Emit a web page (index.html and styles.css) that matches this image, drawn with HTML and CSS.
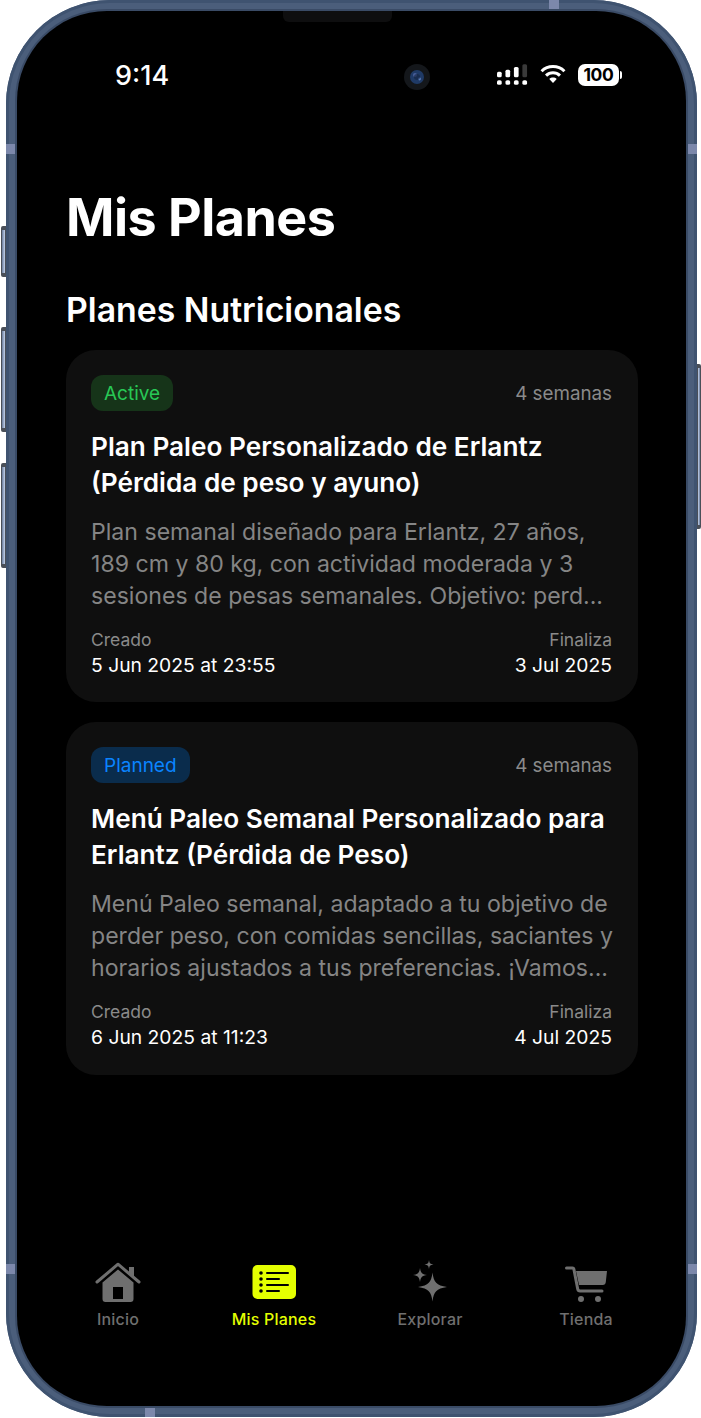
FILE: index.html
```html
<!DOCTYPE html>
<html lang="es">
<head>
<meta charset="utf-8">
<title>Mis Planes</title>
<link rel="stylesheet" href="styles.css">
</head>
<body>
<div class="phone">
  <span class="btn btn-a"></span>
  <span class="btn btn-b"></span>
  <span class="btn btn-c"></span>
  <span class="btn btn-d"></span>
  <span class="band band-l1"></span>
  <span class="band band-l2"></span>
  <span class="band band-r1"></span>
  <span class="band band-r2"></span>
  <span class="band band-t"></span>
  <span class="band band-b"></span>
  <div class="screen">
    <span class="speaker"></span>
    <div class="status">
      <span class="time">9:14</span>
      <svg class="camera" width="28" height="28" viewBox="0 0 28 28"><circle cx="14" cy="14" r="13" fill="#14171b"/><circle cx="14" cy="14" r="7" fill="#1f3a66"/><circle cx="12" cy="12" r="2" fill="#4a5f9a"/><circle cx="16.5" cy="16" r="1.4" fill="#5c7fc0"/><circle cx="14" cy="14" r="3" fill="#14233f" opacity=".6"/></svg>
      <div class="indicators">
        <svg width="31" height="22" viewBox="0 0 33 23"><g fill="#fff"><rect x="0" y="8" width="5" height="6" rx="1.6"/><rect x="9" y="6" width="5" height="8" rx="1.6"/><rect x="18" y="3" width="5" height="11" rx="1.6"/><rect x="27" y="0" width="5" height="14" rx="1.6" fill="#3a3a3a"/><rect x="0" y="17" width="5" height="5" rx="1.8"/><rect x="9" y="17" width="5" height="5" rx="1.8"/><rect x="18" y="17" width="5" height="5" rx="1.8"/><rect x="27" y="17" width="5" height="5" rx="1.8"/></g></svg>
        <svg class="wifi" width="26" height="20" viewBox="0 0 27 21"><g fill="none" stroke="#fff" stroke-width="3.2"><path d="M1.5 7.6C8.2 1.1 18.8 1.1 25.5 7.6"/><path d="M6.2 12.2C10.4 8.2 16.6 8.2 20.8 12.2"/></g><path d="M9.6 15.8C11.8 13.8 15.2 13.8 17.4 15.8L13.5 20Z" fill="#fff"/></svg>
        <div class="battery"><span class="batt-body">100</span><span class="batt-tip"></span></div>
      </div>
    </div>
    <main class="content">
      <h1 class="page-title">Mis Planes</h1>
      <h2 class="section-title">Planes Nutricionales</h2>
      <article class="card">
        <div class="card-top">
          <span class="badge badge-active">Active</span>
          <span class="duration">4 semanas</span>
        </div>
        <h3 class="plan-title">Plan Paleo Personalizado de Erlantz (Pérdida de peso y ayuno)</h3>
        <p class="plan-desc">Plan semanal diseñado para Erlantz, 27 años, 189 cm y 80 kg, con actividad moderada y 3 sesiones de pesas semanales. Objetivo: perd...</p>
        <div class="dates">
          <div><div class="date-label">Creado</div><div class="date-value">5 Jun 2025 at 23:55</div></div>
          <div class="date-end"><div class="date-label">Finaliza</div><div class="date-value">3 Jul 2025</div></div>
        </div>
      </article>
      <article class="card">
        <div class="card-top">
          <span class="badge badge-planned">Planned</span>
          <span class="duration">4 semanas</span>
        </div>
        <h3 class="plan-title">Menú Paleo Semanal Personalizado para Erlantz (Pérdida de Peso)</h3>
        <p class="plan-desc">Menú Paleo semanal, adaptado a tu objetivo de perder peso, con comidas sencillas, saciantes y horarios ajustados a tus preferencias. ¡Vamos...</p>
        <div class="dates">
          <div><div class="date-label">Creado</div><div class="date-value">6 Jun 2025 at 11:23</div></div>
          <div class="date-end"><div class="date-label">Finaliza</div><div class="date-value">4 Jul 2025</div></div>
        </div>
      </article>
    </main>
    <nav class="tabbar">
      <div class="tab">
        <svg class="tab-icon" width="46" height="40" viewBox="0 0 46 40"><path d="M2 20 23 2.200l21 17.800" fill="none" stroke="#6f6f6f" stroke-width="3" stroke-linecap="round" stroke-linejoin="round"/><path d="M34 5h5v10.500l-5-4.200Z" fill="#6f6f6f"/><path fill-rule="evenodd" d="M23 7.500 38.500 20.500V37a3 3 0 0 1-3 3H10.500a3 3 0 0 1-3-3V20.500ZM18 25V37H28V25Z" fill="#6f6f6f"/></svg>
        <span class="tab-label">Inicio</span>
      </div>
      <div class="tab tab-on">
        <svg class="tab-icon" width="46" height="40" viewBox="0 0 46 40"><rect x="1.500" y="3" width="43.500" height="34" rx="5" fill="#e4ff00"/><g fill="#000"><circle cx="10" cy="11" r="1.800"/><circle cx="10" cy="17" r="1.800"/><circle cx="10" cy="23" r="1.800"/><circle cx="10" cy="29" r="1.800"/><rect x="15" y="10" width="23" height="2" rx="1"/><rect x="15" y="16" width="14" height="2" rx="1"/><rect x="15" y="22" width="23" height="2" rx="1"/><rect x="15" y="28" width="14" height="2" rx="1"/></g></svg>
        <span class="tab-label">Mis Planes</span>
      </div>
      <div class="tab">
        <svg class="tab-icon" width="46" height="40" viewBox="0 0 46 40"><g fill="#6f6f6f"><path d="M25.500 10.500c1.300 10 3.800 12.800 14.500 14.500-10.700 1.700-13.200 4.500-14.500 14.500C24.200 29.500 21.700 26.700 11 25c10.700-1.700 13.200-4.500 14.500-14.500Z"/><path d="M13 6c.6 4.600 1.900 6.400 7 7-5.100.6-6.400 2.400-7 7-.6-4.600-1.900-6.400-7-7 5.100-.6 6.400-2.400 7-7Z"/><path d="M22 -2c.4 3 1.200 4.100 4.500 4.500C23.200 2.900 22.400 4 22 7c-.4-3-1.200-4.100-4.500-4.500C20.800 2.100 21.600 1 22 -2Z"/></g></svg>
        <span class="tab-label">Explorar</span>
      </div>
      <div class="tab">
        <svg class="tab-icon" width="46" height="40" viewBox="0 0 46 40"><path d="M3.500 6H9.500c.8 0 1.200.4 1.400 1.200L14.700 27c.3 1.400 1 2 2.400 2H39" fill="none" stroke="#6f6f6f" stroke-width="3" stroke-linecap="round"/><path d="M13 9H44l-1.200 11c-.2 2-1.200 3-3 3H16Z" fill="#6f6f6f"/><circle cx="18" cy="37" r="3" fill="#6f6f6f"/><circle cx="35" cy="37" r="3" fill="#6f6f6f"/></svg>
        <span class="tab-label">Tienda</span>
      </div>
    </nav>
  </div>
</div>
</body>
</html>
```
FILE: styles.css
```css
* { box-sizing: border-box; }
html, body { margin: 0; padding: 0; background: #fff; }
body { font-family: Inter, "Liberation Sans", sans-serif; width: 701px; height: 1418px; overflow: hidden; }

.phone {
  position: relative;
  margin-left: 6px;
  width: 691px;
  height: 1417px;
  padding: 11px;
  border-radius: 104px;
  background: #4b5e7b;
  box-shadow: inset 0 0 0 3px #3f5370;
}
.screen {
  position: relative;
  height: 100%;
  background: #000;
  border-radius: 90px;
  box-shadow: 0 0 0 2px #3a4b66;
  display: flex;
  flex-direction: column;
  overflow: hidden;
}
.btn {
  position: absolute;
  width: 5px;
  background: linear-gradient(90deg, #6b7d9c, #c4d3ec);
  border: 1px solid #4a4f58;
  border-top-width: 4px;
  border-bottom-width: 4px;
  border-radius: 2px 0 0 2px;
}
.btn-a { left: -5px; top: 226px; height: 51px; }
.btn-b { left: -5px; top: 327px; height: 105px; }
.btn-c { left: -5px; top: 463px; height: 105px; }
.btn-d { right: -4px; top: 364px; height: 165px; width: 4px; border-radius: 0 2px 2px 0; background: linear-gradient(90deg, #c4d3ec, #6b7d9c); }
.band { position: absolute; background: #7c88ab; }
.band-l1, .band-l2 { left: 0; width: 11px; height: 10px; }
.band-r1, .band-r2 { right: 0; width: 11px; height: 10px; }
.band-l1, .band-r1 { top: 144px; }
.band-l2, .band-r2 { top: 1264px; }
.band-t { left: 543px; top: 0; width: 10px; height: 11px; }
.band-b { left: 139px; bottom: 0; width: 10px; height: 11px; }

.speaker {
  position: absolute;
  left: 266px;
  top: 0;
  width: 109px;
  height: 11px;
  background: #0e0e0f;
  border-radius: 0 0 6px 6px;
}
.status {
  display: flex;
  align-items: center;
  height: 28px;
  margin-top: 50px;
  padding-left: 98px;
  color: #fff;
}
.time { font-size: 27px; font-weight: 500; width: 288px; }
.camera { flex: none; margin-top: 4px; }
.indicators { display: flex; align-items: center; margin-left: 66px; gap: 12px; }
.wifi { margin-top: -3px; }
.battery { display: flex; align-items: center; }
.batt-body {
  display: block;
  width: 41px;
  height: 22px;
  border-radius: 7px;
  background: #fff;
  color: #000;
  font-size: 17.500px;
  font-weight: 700;
  line-height: 22px;
  text-align: center;
  letter-spacing: -.3px;
}
.batt-tip { width: 2px; height: 8px; background: #fff; margin-left: 1px; border-radius: 0 2px 2px 0; }

.content { padding: 0 48px 0 49px; }
.page-title {
  margin: 99px 0 0;
  font-size: 52px;
  line-height: 60px;
  font-weight: 700;
  color: #fff;
  letter-spacing: -.5px;
}
.section-title {
  margin: 42px 0 0;
  font-size: 33.800px;
  line-height: 40px;
  font-weight: 600;
  color: #fff;
}
.card {
  margin-top: 20px;
  height: 352.400px;
  padding: 25px 26px 25px 25px;
  background: #0f0f0f;
  border-radius: 30px;
}
.card-top { display: flex; justify-content: space-between; align-items: center; height: 36px; }
.badge {
  display: block;
  height: 36px;
  padding: 0 13px;
  border-radius: 12px;
  font-size: 19px;
  line-height: 37px;
}
.badge-active { background: #163419; color: #28c856; }
.badge-planned { background: #0a2c4c; color: #0a84ff; }
.duration { font-size: 18.800px; color: #8a8a8a; }
.plan-title {
  margin: 18px 0 0;
  font-size: 26.200px;
  line-height: 36px;
  font-weight: 600;
  color: #fff;
}
.plan-desc {
  margin: 15px -3px 0 0;
  font-size: 23.100px;
  line-height: 32px;
  color: #858585;
}
.dates { display: flex; justify-content: space-between; margin-top: 17px; }
.date-end { text-align: right; }
.date-label { font-size: 17.500px; line-height: 22px; color: #8a8a8a; }
.date-value { font-size: 19.300px; line-height: 28px; color: #fff; }

.tabbar {
  margin-top: auto;
  margin-bottom: 77px;
  padding: 0 23px;
  display: grid;
  grid-template-columns: repeat(4, 156px);
}
.tab { display: flex; flex-direction: column; align-items: center; gap: 7px; }
.tab-icon { overflow: visible; }
.tab-label { font-size: 16px; line-height: 20px; font-weight: 500; color: #6f6f6f; letter-spacing: .2px; }
.tab-on .tab-label { color: #e4ff00; }
```
